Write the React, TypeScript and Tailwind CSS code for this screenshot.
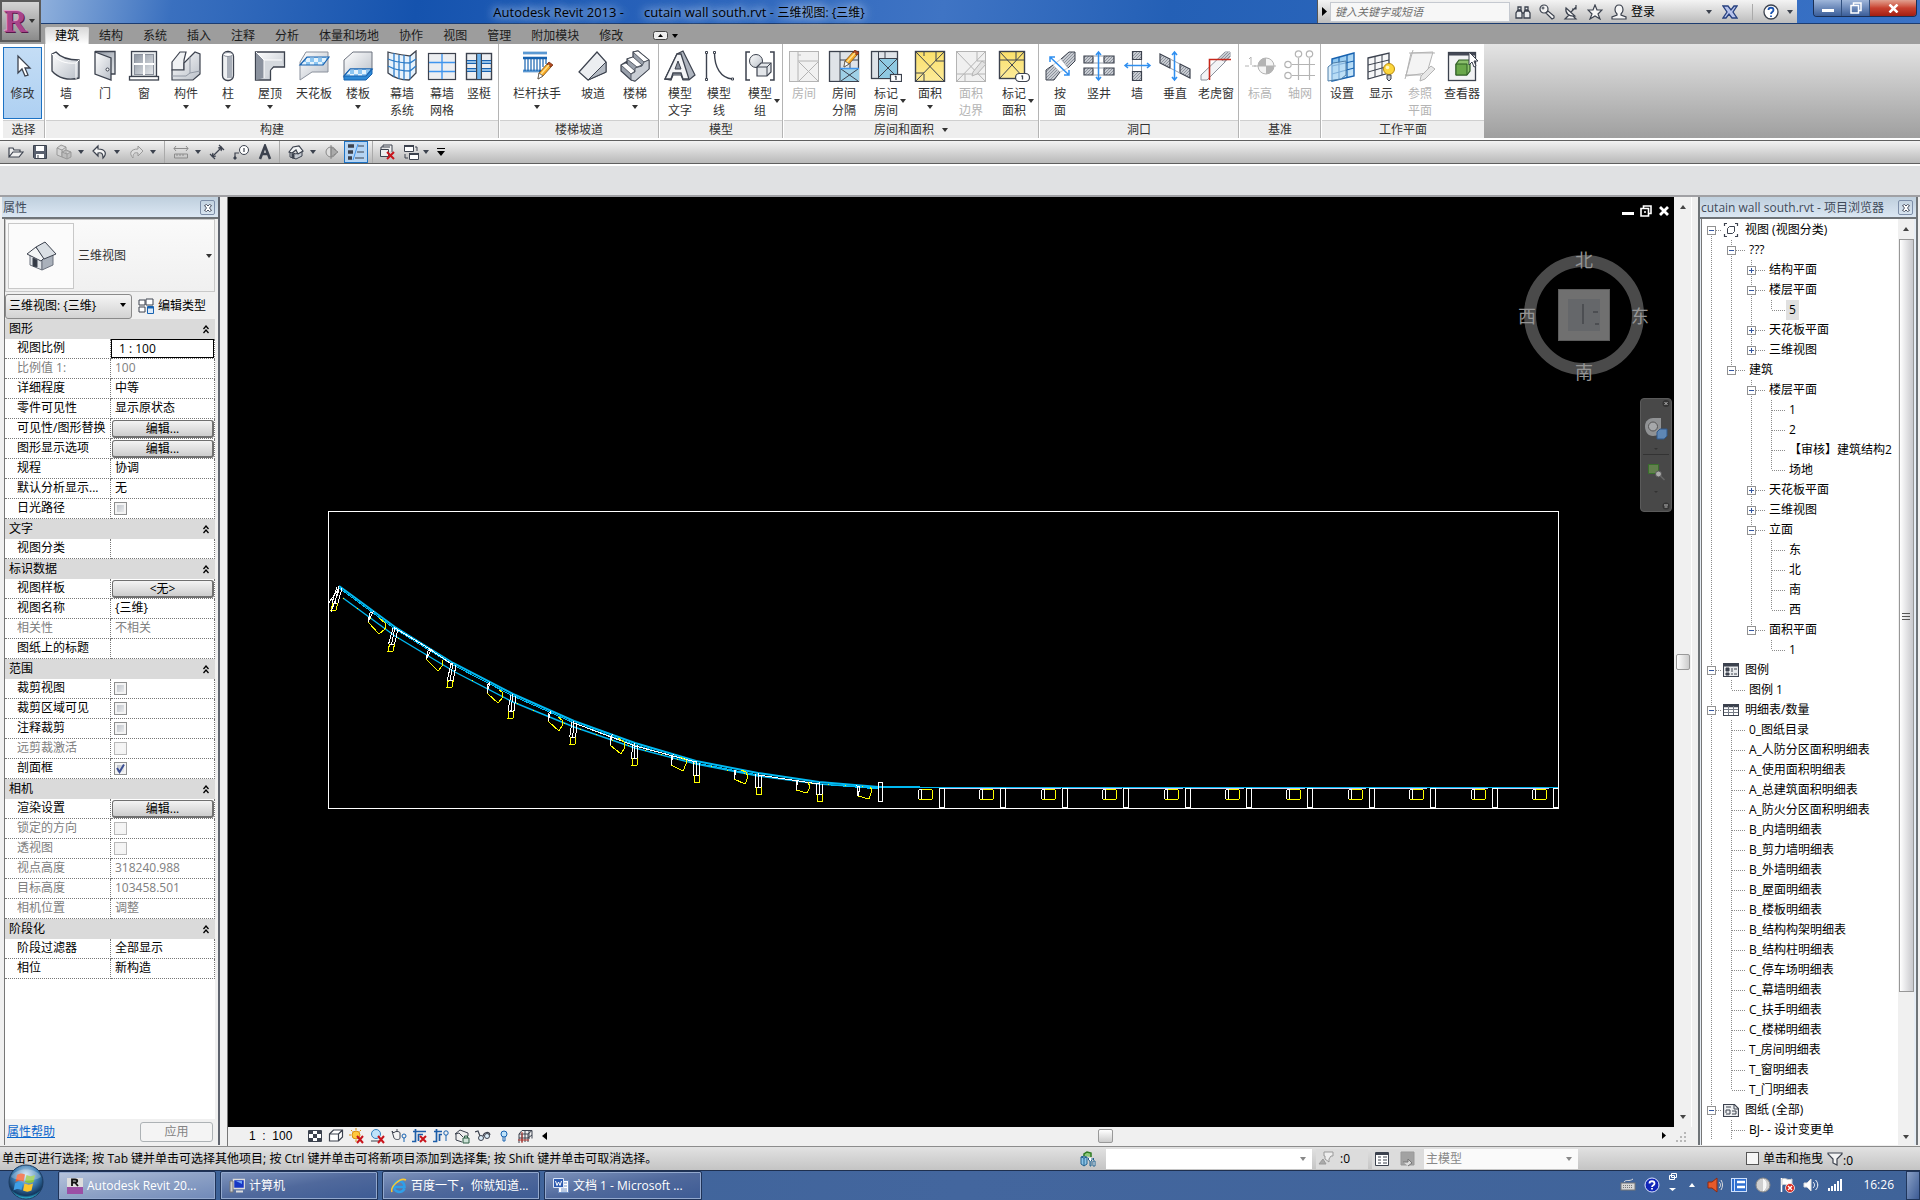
import type { ReactNode } from "react";

const INK = "#3c424e";
const GREY = "#b4b4b4";
const BLUE = "#1762b0";

type SvgProps = { children: ReactNode; size?: number; className?: string };

function Svg({ children, size = 16, className = "" }: SvgProps) {
  return (
    <svg
      width={size}
      height={size}
      viewBox={`0 0 ${size} ${size}`}
      fill="none"
      stroke={INK}
      strokeWidth={1}
      aria-hidden="true"
      className={`shrink-0 ${className}`}
    >
      {children}
    </svg>
  );
}

function Caret({ className = "" }: { className?: string }) {
  return (
    <svg width="6" height="4" viewBox="0 0 6 4" aria-hidden="true" className={`shrink-0 ${className}`}>
      <path d="M0 0h6L3 4z" fill="currentColor" />
    </svg>
  );
}

// Gradients shared by all the icons
function Defs() {
  return (
    <svg className="absolute h-0 w-0" aria-hidden="true">
      <defs>
        <linearGradient id="metal" x1="0" y1="0" x2="1" y2="1">
          <stop offset="0" stopColor="#ffffff" />
          <stop offset="1" stopColor="#b9bfc8" />
        </linearGradient>
        <linearGradient id="metalDark" x1="0" y1="0" x2="1" y2="1">
          <stop offset="0" stopColor="#8d95a1" />
          <stop offset="1" stopColor="#e6e9ec" />
        </linearGradient>
        <linearGradient id="sky" x1="0" y1="0" x2="1" y2="1">
          <stop offset="0" stopColor="#7cbcec" />
          <stop offset="1" stopColor="#d6edfb" />
        </linearGradient>
        <linearGradient id="gold" x1="0" y1="0" x2="0" y2="1">
          <stop offset="0" stopColor="#fbe06a" />
          <stop offset="1" stopColor="#fdeb9a" />
        </linearGradient>
        <linearGradient id="purple" x1="0" y1="0" x2="1" y2="1">
          <stop offset="0" stopColor="#e6a6cf" />
          <stop offset="0.6" stopColor="#a8438a" />
          <stop offset="1" stopColor="#57164a" />
        </linearGradient>
        <radialGradient id="orb" cx="0.5" cy="0.3" r="0.7">
          <stop offset="0" stopColor="#cfe3f2" />
          <stop offset="0.5" stopColor="#3f7fb5" />
          <stop offset="0.85" stopColor="#12375f" />
          <stop offset="1" stopColor="#35d8f5" />
        </radialGradient>
        <pattern id="hatch" width="3" height="3" patternUnits="userSpaceOnUse">
          <rect width="3" height="3" fill="#c8ccd2" />
          <path d="M0 3L3 0" stroke="#7d838e" strokeWidth="0.8" />
        </pattern>
        <pattern id="check" width="8" height="8" patternUnits="userSpaceOnUse">
          <rect width="8" height="8" fill="#8cc6f2" />
          <path d="M0 0h4v4H0zM4 4h4v4H4z" fill="#e4f3fd" />
        </pattern>
      </defs>
    </svg>
  );
}

const pencil = (
  <g strokeWidth="0.8">
    <path d="M18 23l8-9 4 3-8 9-5 3z" fill="#f7a823" stroke="#7a4a12" />
    <path d="M26 14l2-2 4 3-2 2z" fill="#b0481e" stroke="#7a3212" />
    <path d="M20 24l8-9" stroke="#ffe08a" strokeWidth="1.6" />
    <path d="M18 23l-1 6 5-3z" fill="#fff" stroke="#555" />
  </g>
);

const icons: Record<string, ReactNode> = {
  modify: (
    <Svg size={32}>
      <path d="M11 6v17l4-4 3 7 3-1-3-7h5z" fill="#fff" strokeWidth="1.3" />
    </Svg>
  ),
  wall: (
    <Svg size={32}>
      <path d="M2 4l4-2c5 6 13 8 23 8v18c-11 3-21 0-27-7z" fill="url(#metal)" strokeWidth="1.3" />
      <path d="M2 4c6 7 13 10 24 9l3-3M26 13v16" stroke="#fff" />
    </Svg>
  ),
  door: (
    <Svg size={32}>
      <path d="M6 1.500h20V24h-4" fill="url(#metalDark)" strokeWidth="1.300" />
      <path d="M6 2l16 6v22L6 24z" fill="url(#metal)" strokeWidth="1.300" />
      <circle cx="18.500" cy="19.500" r="1.500" fill="#fff" />
    </Svg>
  ),
  window: (
    <Svg size={32}>
      <rect x="3.500" y="1.500" width="25" height="25" fill="#e8ebee" strokeWidth="1.300" />
      <rect x="6.500" y="4.500" width="19" height="20" fill="url(#metalDark)" stroke="#8b919c" />
      <path d="M16 4v21M6 14h20" stroke="#fff" strokeWidth="2" />
      <rect x="1.500" y="26.500" width="29" height="3.500" fill="#fff" strokeWidth="1.300" />
    </Svg>
  ),
  component: (
    <Svg size={32}>
      <path d="M2 12l8-10h6l-2 8v10H2z" fill="#f0f2f4" strokeWidth="1.200" />
      <path d="M20 7l5-5 5 2v20l-7 6H2V20h12v-7z" fill="url(#metal)" strokeWidth="1.200" />
      <path d="M20 7v16l-4 3H2M20 23l10-2" stroke="#9299a5" />
    </Svg>
  ),
  column: (
    <Svg size={32}>
      <rect x="10.500" y="1.500" width="11" height="29" rx="5" fill="#eef0f2" strokeWidth="1.300" />
      <rect x="15" y="4" width="5" height="24" fill="#a9afb9" stroke="none" />
      <ellipse cx="16" cy="4.500" rx="4.500" ry="2" fill="#fff" stroke="#8b919c" />
    </Svg>
  ),
  roof: (
    <Svg size={32}>
      <path d="M1.500 2h29v15h-11l-3 3v10h-15z" fill="url(#metal)" strokeWidth="1.300" />
      <path d="M2 2l8 8v18l-8 2z" fill="#8b929e" stroke="none" />
      <path d="M10 10h18l2 6H19l-3 4-6 8z" fill="#d5d9de" stroke="none" />
      <path d="M2 2l8 8h18M10 10v18" stroke="#fff" />
    </Svg>
  ),
  ceiling: (
    <Svg size={32}>
      <path d="M2 12v18l12-8h16V2H8z" fill="url(#metal)" stroke="#8b919c" />
      <path d="M9 7h22l-6 8H2z" fill="url(#check)" stroke={BLUE} strokeWidth="1.200" />
    </Svg>
  ),
  floor: (
    <Svg size={32}>
      <path d="M2 10l9-8h19v18H10l-8 8z" fill="url(#metal)" stroke="#6c727e" />
      <path d="M8 19h22v5l-6 6H2v-4z" fill="#2f8ad6" stroke={BLUE} />
      <path d="M8 19h22l-6 7H2z" fill="url(#check)" stroke={BLUE} strokeWidth="1.200" />
    </Svg>
  ),
  curtainSystem: (
    <Svg size={32}>
      <path d="M2 2c7 2 15 3 22 4l6-5v22l-7 7C14 30 7 27 2 23z" fill="#e8f3fc" strokeWidth="1.300" />
      <path d="M24 6v23M8 3v24M13 5v24M18 5v25M2 9c7 3 15 4 22 4l6-4M2 16c7 4 15 5 22 5l6-5" stroke="#2b7cc9" strokeWidth="1.300" />
    </Svg>
  ),
  curtainGrid: (
    <Svg size={32}>
      <rect x="2.500" y="3.500" width="27" height="26" fill="#eceef1" strokeWidth="1.200" />
      <path d="M3 12.500h26M3 21.500h26M16 4v25" stroke="#3f95ee" strokeWidth="1.400" />
    </Svg>
  ),
  mullion: (
    <Svg size={32}>
      <rect x="3.500" y="3.500" width="25" height="26" fill="#eceef1" strokeWidth="1.400" />
      <path d="M4 12h24M4 20h24" stroke={BLUE} strokeWidth="4" />
      <path d="M4 12h24M4 20h24" stroke="#b9ddf7" strokeWidth="1.500" />
      <path d="M16 3v27" stroke={INK} strokeWidth="6" />
      <path d="M16 4v25" stroke="#6db4ee" strokeWidth="3.600" />
    </Svg>
  ),
  railing: (
    <Svg size={32}>
      <path d="M2 3h24M2 8h24M2 21h18" stroke={BLUE} strokeWidth="2.600" />
      <path d="M2 3h24M2 21h16" stroke="#9fd0f5" />
      <path d="M4 9v12M7 9v12M10 9v12M13 9v12M16 9v12M19 9v12M22 9v8M25 9v5" stroke={BLUE} strokeWidth="1.200" />
      {pencil}
    </Svg>
  ),
  ramp: (
    <Svg size={32}>
      <path d="M2 22L20 2l9 10v10L11 30z" fill="#eceef1" strokeWidth="1.200" />
      <path d="M11 30L29 12v10z" fill="#b3b9c2" strokeWidth="1" />
    </Svg>
  ),
  stair: (
    <Svg size={32}>
      <path d="M2 15l5-3 1 3 0-6 6-2 0-5 5-1 11 9v9L16 31l-4-1-10-9z" fill="#9aa1ac" strokeWidth="1.200" />
      <path d="M14 2l5-1 11 9-5 2zM8 9l6-2 9 8-5 2zM2 15l5-2 9 8-4 3z" fill="#fff" strokeWidth="0.800" />
      <path d="M25 12l5-2v9L16 31l-4-1v-6l4-2v-4l7-2z" fill="#c9ced5" strokeWidth="0.800" />
    </Svg>
  ),
  modelText: (
    <Svg size={32}>
      <path d="M1 29L13 4l6-3 12 24-6 5h-6l-2-5H9l-2 5z" fill="#aeb4be" strokeWidth="1.200" />
      <path d="M1 29L13 4h4l8 25h-6l-2-6H9l-2 6z" fill="#f4f5f7" strokeWidth="1.300" />
      <path d="M11 19l3-8 3 8z" fill="#8a919d" />
    </Svg>
  ),
  modelLine: (
    <Svg size={32}>
      <path d="M3.500 3v26M11.500 3c0 14 6 25 18 26" strokeWidth="1.400" />
      <path d="M2.500 1.500h2v2h-2zM2.500 28.500h2v2h-2zM10.500 1.500h2v2h-2zM28.500 28h2v2h-2z" fill="#fff" />
    </Svg>
  ),
  modelGroup: (
    <Svg size={32}>
      <path d="M6 2H2v28h4M26 2h4v28h-4" strokeWidth="1.500" />
      <circle cx="12" cy="11" r="6.500" fill="url(#metal)" />
      <path d="M13 17l4-4h10v9l-4 4H13z" fill="#e3e6ea" strokeWidth="1.200" />
      <path d="M13 17h10v9M23 17l4-4" />
    </Svg>
  ),
  room: (
    <Svg size={32}>
      <rect x="1.500" y="1.500" width="29" height="30" fill="#f1f1f1" stroke={GREY} />
      <path d="M10 1v30M10 11h21M11 12l19 19M30 12L11 31M10 5h3" stroke={GREY} />
    </Svg>
  ),
  roomSep: (
    <Svg size={32}>
      <rect x="1.500" y="1.500" width="29" height="30" fill="#dfe3e8" strokeWidth="1.300" />
      <path d="M12 19h19v12H12z" fill="#9fd0e6" stroke="none" />
      <path d="M12 1v30M12 10h18M13 31l17-12M13 19l17 12M22 10v9" />
      <path d="M12 18.500h19" stroke="#3f95ee" strokeWidth="1.500" />
      <g transform="translate(-1 -12)">{pencil}</g>
    </Svg>
  ),
  roomTag: (
    <Svg size={32}>
      <rect x="1.500" y="1.500" width="26" height="27" fill="#dfe3e8" strokeWidth="1.300" />
      <path d="M9 8h18v20H9z" fill="#8fc9e2" stroke="none" />
      <path d="M8.500 2v26M8 8.500h19M9 9l18 18M27 9L9 27M15 2v6" />
      <rect x="20.500" y="24.500" width="11" height="7" fill="#fff" strokeWidth="1.200" />
      <path d="M26 26v4M25 27l1-1" strokeWidth="1.300" />
    </Svg>
  ),
  area: (
    <Svg size={32}>
      <rect x="1.500" y="1.500" width="29" height="30" fill="url(#gold)" strokeWidth="1.400" />
      <path d="M2 2l28 29M30 2L2 31M10 24v7M2 23h8M22 2v9h9M10 2v4" />
    </Svg>
  ),
  areaBoundary: (
    <Svg size={32}>
      <rect x="1.500" y="1.500" width="29" height="30" fill="#f0f0f0" stroke={GREY} />
      <path d="M2 2l28 29M30 2L2 31M2 24h28M10 24v7M22 2v9h9" stroke={GREY} />
      <path d="M18 22l9-11 4 3-9 10-5 2z" fill="#e2e2e2" stroke={GREY} />
    </Svg>
  ),
  areaTag: (
    <Svg size={32}>
      <rect x="1.500" y="1.500" width="25" height="27" fill="url(#gold)" strokeWidth="1.400" />
      <path d="M2 2l24 26M26 2L2 28M2 10h24M18 2v8" />
      <rect x="17.500" y="23.500" width="14" height="8" rx="4" fill="#fff" strokeWidth="1.200" />
      <path d="M24.500 25.500v4M23.500 26.500l1-1" strokeWidth="1.300" />
    </Svg>
  ),
  byFace: (
    <Svg size={32}>
      <path d="M17 9l8-7h6v9l-7 7z" fill="url(#hatch)" />
      <path d="M2 30v-10l7-5 7 7-6 8z" fill="url(#hatch)" />
      <path d="M9 15l8-6 7 9-8 4z" fill="#fff" stroke="#c2c6cc" />
      <path d="M6 7l19 18M6 12V7h5M25 20v5h-5" stroke="#2f8ff0" strokeWidth="1.500" />
    </Svg>
  ),
  shaft: (
    <Svg size={32}>
      <path d="M1 6h9v7H1zM21 6h10v7H21zM1 18h9v7H1zM21 18h10v7H21z" fill="url(#hatch)" strokeWidth="1.200" />
      <path d="M10 6h11M10 13h11M10 18h11M10 25h11" stroke="#9aa0aa" />
      <path d="M15.500 2v28M13 5l2.500-3L18 5M13 27l2.500 3 2.500-3" stroke="#2f8ff0" strokeWidth="1.500" />
    </Svg>
  ),
  wallOpening: (
    <Svg size={32}>
      <path d="M11.500 1.500h9v8h-9zM11.500 21.500h9v9h-9z" fill="url(#hatch)" strokeWidth="1.200" />
      <path d="M11.500 10v11M20.500 10v11" stroke="#9aa0aa" />
      <path d="M4 15.500h25M7 13l-3 2.500L7 18M26 13l3 2.500-3 2.500" stroke="#2f8ff0" strokeWidth="1.500" />
    </Svg>
  ),
  vertical: (
    <Svg size={32}>
      <path d="M1 4l10 5v9L1 13zM21 14l10 5v9l-10-5z" fill="url(#hatch)" strokeWidth="1.200" />
      <path d="M11 9l10 5M11 18l10 5" stroke="#9aa0aa" />
      <path d="M15.500 2v28M13 5l2.500-3L18 5M13 27l2.500 3 2.500-3" stroke="#2f8ff0" strokeWidth="1.500" />
    </Svg>
  ),
  dormer: (
    <Svg size={32}>
      <path d="M1 30v-5L25 2h5v5L7 30z" fill="#f3f4f6" stroke="#8b919c" />
      <path d="M18 9l7-7h5v5l-5 5z" fill="url(#hatch)" stroke="none" />
      <path d="M9.500 30V9.500H31" stroke="#c6281c" strokeWidth="1.600" />
    </Svg>
  ),
  level: (
    <Svg size={32}>
      <path d="M1 16h4M8 16h4M7 7v8M5 9l2-2" stroke={GREY} />
      <circle cx="22" cy="16" r="8" fill="#f4f4f4" stroke={GREY} />
      <path d="M22 8v8h-8a8 8 0 018-8zM22 24v-8h8a8 8 0 01-8 8z" fill={GREY} stroke="none" />
      <path d="M10 16h22" stroke={GREY} />
    </Svg>
  ),
  grid: (
    <Svg size={32}>
      <path d="M14.500 8v22M25.500 8v22M8 14.500h23M8 25.500h23" stroke={GREY} strokeWidth="1.200" />
      <g fill="#fff" stroke={GREY} strokeWidth="1.200">
        <circle cx="14.500" cy="4" r="3.200" />
        <circle cx="25.500" cy="4" r="3.200" />
        <circle cx="4" cy="14.500" r="3.200" />
        <circle cx="4" cy="25.500" r="3.200" />
      </g>
    </Svg>
  ),
  setPlane: (
    <Svg size={32}>
      <path d="M6 9l22-6v23L6 31z" fill="url(#sky)" stroke={BLUE} strokeWidth="1.400" />
      <path d="M13 7v22M21 5v22M6 16l22-5M6 24l22-6" stroke={BLUE} strokeWidth="1.200" />
      <path d="M2 17l5-4 13-2v14l-5 4-13 2z" fill="#c5e3f7" fillOpacity="0.600" stroke="#4e7ea8" />
    </Svg>
  ),
  showPlane: (
    <Svg size={32}>
      <path d="M3 8l21-5v20L3 29z" fill="#f6f7f8" strokeWidth="1.300" />
      <path d="M10 6v21M17 5v20M3 15l21-5M3 22l21-6" />
      <circle cx="24" cy="19" r="5.500" fill="#fcd63c" stroke="#b98a10" />
      <circle cx="22.500" cy="17.500" r="1.800" fill="#fff7c4" stroke="none" />
      <path d="M22 25h4v4l-2 2-2-2z" fill="#c9ced5" />
    </Svg>
  ),
  refPlane: (
    <Svg size={32}>
      <path d="M7 3l22-1-6 21-21 3z" fill="#f4f4f4" stroke={GREY} />
      <path d="M5 3h26M9 0L1 29M1 25h16" stroke={GREY} />
      <path d="M17 26l10-10 4 3-10 10-5 2z" fill="#e8e8e8" stroke={GREY} />
    </Svg>
  ),
  viewer: (
    <Svg size={32}>
      <rect x="2.500" y="2.500" width="27" height="28" fill="#f2f3f4" strokeWidth="1.300" />
      <path d="M3 3h26v2H3z" fill="#4c4f5c" />
      <path d="M10 14l3-4h11v11l-3 4H10z" fill="#8cc06c" stroke="#2d5d22" strokeWidth="1.200" />
      <path d="M10 14h11v11H10z" fill="#6aa84a" stroke="#2d5d22" />
      <path d="M23 2v13l3-3 2 5 2-1-2-5h4z" fill="#fff" />
    </Svg>
  ),
};

type Tool = { text: string; icon: string; width: string; caret?: "below" | "side"; off?: boolean };
type Panel = { title: string; menu?: boolean; tools: Tool[] };

const panels: Panel[] = [
  {
    title: "构建",
    tools: [
      { text: "墙", icon: "wall", width: "w-10", caret: "below" },
      { text: "门", icon: "door", width: "w-[38px]" },
      { text: "窗", icon: "window", width: "w-10" },
      { text: "构件", icon: "component", width: "w-11", caret: "below" },
      { text: "柱", icon: "column", width: "w-10", caret: "below" },
      { text: "屋顶", icon: "roof", width: "w-11", caret: "below" },
      { text: "天花板", icon: "ceiling", width: "w-11" },
      { text: "楼板", icon: "floor", width: "w-11", caret: "below" },
      { text: "幕墙\n系统", icon: "curtainSystem", width: "w-11" },
      { text: "幕墙\n网格", icon: "curtainGrid", width: "w-9" },
      { text: "竖梃", icon: "mullion", width: "w-[38px]" },
    ],
  },
  {
    title: "楼梯坡道",
    tools: [
      { text: "栏杆扶手", icon: "railing", width: "w-[74px]", caret: "below" },
      { text: "坡道", icon: "ramp", width: "w-[38px]" },
      { text: "楼梯", icon: "stair", width: "w-[46px]", caret: "below" },
    ],
  },
  {
    title: "模型",
    tools: [
      { text: "模型\n文字", icon: "modelText", width: "w-10" },
      { text: "模型\n线", icon: "modelLine", width: "w-[38px]" },
      { text: "模型\n组", icon: "modelGroup", width: "w-11", caret: "side" },
    ],
  },
  {
    title: "房间和面积",
    menu: true,
    tools: [
      { text: "房间", icon: "room", width: "w-10", off: true },
      { text: "房间\n分隔", icon: "roomSep", width: "w-10" },
      { text: "标记\n房间", icon: "roomTag", width: "w-11", caret: "side" },
      { text: "面积", icon: "area", width: "w-11", caret: "below" },
      { text: "面积\n边界", icon: "areaBoundary", width: "w-[38px]", off: true },
      { text: "标记\n面积", icon: "areaTag", width: "w-12", caret: "side" },
    ],
  },
  {
    title: "洞口",
    tools: [
      { text: "按\n面", icon: "byFace", width: "w-10" },
      { text: "竖井", icon: "shaft", width: "w-[38px]" },
      { text: "墙", icon: "wallOpening", width: "w-[38px]" },
      { text: "垂直", icon: "vertical", width: "w-[38px]" },
      { text: "老虎窗", icon: "dormer", width: "w-11" },
    ],
  },
  {
    title: "基准",
    tools: [
      { text: "标高", icon: "level", width: "w-10", off: true },
      { text: "轴网", icon: "grid", width: "w-10", off: true },
    ],
  },
  {
    title: "工作平面",
    tools: [
      { text: "设置", icon: "setPlane", width: "w-10" },
      { text: "显示", icon: "showPlane", width: "w-[38px]" },
      { text: "参照\n平面", icon: "refPlane", width: "w-10", off: true },
      { text: "查看器", icon: "viewer", width: "w-11" },
    ],
  },
];

const tabs = ["建筑", "结构", "系统", "插入", "注释", "分析", "体量和场地", "协作", "视图", "管理", "附加模块", "修改"];

function TitleBar() {
  return (
    <div className="flex h-6 items-start border-b border-[#1c3c70] bg-[linear-gradient(100deg,#8fb0dc_0%,#3a70bf_7%,#1553ae_20%,#2a63bb_34%,#3f74c4_48%,#2460b6_60%,#3a72c6_100%)]">
      <div className="flex flex-1 items-center justify-center gap-5 self-center text-[13px] leading-5 whitespace-pre text-black [text-shadow:0_0_8px_#d5e4f8,0_0_12px_#b9d0f0]">
        <span>Autodesk Revit 2013 -</span>
        <h1>cutain wall south.rvt - <span className="text-xs">三维视图: {"{三维}"}</span></h1>
      </div>
      <div className="flex h-[23px] w-[480px] items-center border-l border-[#555] bg-linear-to-b from-[#f4f4f4] to-[#bcbcbc]">
        <button type="button" aria-label="展开" className="flex w-3 justify-center text-black">
          <svg width="5" height="9" viewBox="0 0 5 9"><path d="M0 0l5 4.500L0 9z" /></svg>
        </button>
        <input
          aria-label="搜索"
          placeholder="键入关键字或短语"
          className="h-5 w-[180px] border border-[#c5c9d0] bg-[#f7f7f7] pl-1 text-[11px] italic placeholder:text-[#6e6e6e]"
        />
        <div className="flex flex-1 items-center pl-[5px]">
          <div className="flex gap-2">
            <Svg><path d="M3 3h3v4H3zM10 3h3v4h-3zM1 14V9l2-3h3l1 3v5zM15 14V9l-2-3h-3L9 9v5zM7 9h2" fill="#e8eaec" strokeWidth="1.300" /></Svg>
            <Svg><circle cx="5" cy="5" r="4" fill="#f2f2f2" strokeWidth="1.200" /><circle cx="4" cy="4" r="1" /><path d="M7 9l6 6 2-1v-2l-6-5z" fill="#f2f2f2" strokeWidth="1.200" /></Svg>
            <Svg><path d="M3 4c-1 5 3 9 9 8zM8 8l5-5M13 1v4h-4M6 11l-4 4h11l-3-3" fill="#f2f2f2" strokeWidth="1.200" /></Svg>
            <Svg><path d="M8 1l2 5h5l-4 4 2 5-5-3-5 3 2-5-4-4h5z" fill="#f6f6f6" strokeWidth="1.200" /></Svg>
            <Svg><path d="M8 1c3 0 4 2 4 5 0 2-1 3-2 4v1l5 2v2H1v-2l5-2v-1C5 9 4 8 4 6c0-3 1-5 4-5z" fill="#f6f6f6" strokeWidth="1.200" /></Svg>
          </div>
          <button type="button" className="ml-1 text-xs text-black">登录</button>
          <div className="ml-auto flex items-center gap-2.5 pr-1 text-[#3c424e]">
            <Caret />
            <Svg className="mr-1"><path d="M1 2h5l3 4 3-4h3l-4 6 4 6h-5l-3-4-3 4H1l4-6z" fill="#b7c3ec" stroke="#27407f" strokeWidth="1.300" /></Svg>
            <span className="h-4 w-px bg-[#aaa]" />
            <span className="flex items-center gap-2">
              <Svg><circle cx="8" cy="8" r="7" fill="#fff" strokeWidth="1.300" /><path d="M5.500 6c0-3 5-3 5 0 0 2-2.500 2-2.500 4M8 11.500V13" stroke="#1d55b0" strokeWidth="1.800" /></Svg>
              <Caret />
            </span>
          </div>
        </div>
      </div>
      <div className="ml-4 mr-[3px] flex h-[17px] overflow-hidden rounded-b-sm border border-t-0 border-[#1a2f55]">
        <button type="button" aria-label="最小化" className="flex w-7 items-end justify-center border-r border-[#31507f] bg-linear-to-b from-[#9fb6da] to-[#3b5e99] pb-1">
          <span className="h-[3px] w-3 bg-white" />
        </button>
        <button type="button" aria-label="还原" className="flex w-7 items-center justify-center border-r border-[#31507f] bg-linear-to-b from-[#9fb6da] to-[#3b5e99]">
          <svg width="12" height="12" viewBox="0 0 12 12" fill="none" stroke="#fff" strokeWidth="1.500"><path d="M3.500 3V1h7.500v7.500H9M1 3.500h7.500V11H1z" /></svg>
        </button>
        <button type="button" aria-label="关闭" className="flex w-[46px] items-center justify-center bg-linear-to-b from-[#e0a090] via-[#c8412f] to-[#a31d12]">
          <svg width="11" height="9" viewBox="0 0 11 9" stroke="#fff" strokeWidth="2.500"><path d="M1.500 0.500l8 8M9.500 0.500l-8 8" /></svg>
        </button>
      </div>
    </div>
  );
}

function Header() {
  return (
    <header className="flex bg-[#9d9d9d]">
      <button type="button" aria-label="应用程序菜单" className="flex h-[42px] w-[41px] items-center justify-between border-2 border-[#5b5b5b] bg-linear-to-b from-[#d4d4d4] to-[#8b8b8b] pr-1">
        <span className="pl-0.5 font-['Liberation_Serif',serif] text-[32px] leading-[38px] font-bold text-[#a8438a] [text-shadow:1px_1px_0_#57164a,-1px_-1px_0_#e0a0c8]">R</span>
        <Caret className="text-[#333]" />
      </button>
      <div className="min-w-0 flex-1">
        <TitleBar />
        <nav className="flex h-5 items-end pl-1">
          {tabs.map((tab, i) => (
            <button
              key={tab}
              type="button"
              className={
                i === 0
                  ? "h-[17px] rounded-t-xs border border-b-0 border-[#d8d8d8] bg-linear-to-b from-[#d9d9d9] to-white px-[9px] text-xs leading-4 text-black"
                  : "h-[17px] px-2.5 text-xs leading-4 text-[#1c1c1c]"
              }
            >
              {tab}
            </button>
          ))}
          <button type="button" aria-label="最小化功能区" className="ml-5 flex h-[17px] items-center gap-1 text-black">
            <svg width="15" height="9" viewBox="0 0 15 9"><rect x="0.500" y="0.500" width="14" height="8" rx="2" fill="#eee" stroke="#444" /><path d="M5 6h5L7.500 3z" /></svg>
            <Caret />
          </button>
        </nav>
      </div>
    </header>
  );
}

function Ribbon() {
  return (
    <div className="flex border-b-2 border-white bg-linear-to-b from-[#e4e4e4] to-[#9f9f9f]">
      <div className="flex w-[45px] flex-col border-r border-[#b4b4b4] bg-white pl-[3px]">
        <div className="flex h-[76px] pt-[3px] pr-0.5 pb-px">
          <button type="button" className="flex flex-1 flex-col items-center gap-[3px] border border-[#1c72c4] bg-linear-to-b from-[#c4ddf5] to-[#aed0f2] pt-0.5 text-xs leading-[17px] text-[#333]">
            {icons.modify}
            修改
          </button>
        </div>
        <h2 className="h-[18px] border-t border-[#cfcfcf] bg-[#eee] text-center text-xs leading-[18px] text-[#333]">选择</h2>
      </div>
      {panels.map((panel) => (
        <section key={panel.title} className="border-r border-[#b4b4b4] bg-white pl-px last:border-r-0">
          <div className="flex h-[76px]">
            {panel.tools.map((tool) => (
              <button
                key={tool.icon}
                type="button"
                disabled={tool.off}
                className={`${tool.width} flex flex-col items-center pt-1.5 text-xs leading-[17px] whitespace-pre ${tool.off ? "text-[#b4b4b4]" : "text-[#333]"}`}
              >
                {icons[tool.icon]}
                <span className="relative mt-[3px] text-center">
                  {tool.text}
                  {tool.caret === "side" && <Caret className="absolute top-3.5 -right-2" />}
                </span>
                {tool.caret === "below" && <Caret className="mt-[3px]" />}
              </button>
            ))}
          </div>
          <h2 className="flex h-[18px] items-center justify-center gap-2 border-t border-[#cfcfcf] bg-[#eee] text-xs text-[#333]">
            {panel.title}
            {panel.menu && <Caret />}
          </h2>
        </section>
      ))}
    </div>
  );
}

function QuickAccess() {
  return (
    <div className="flex h-6 items-center border-y border-[#5f5f5f] bg-linear-to-b from-[#f2f2f2] to-[#b9b9b9] pl-2 text-[#3c424e]">
      <div className="flex items-center gap-2">
        <Svg><path d="M1 13V4h4l1 2h6v2M1 13l4-5h10l-4 5z" fill="#eee" strokeWidth="1.200" /></Svg>
        <Svg><path d="M1.500 1.500h13v13h-12l-1-1z" fill="#59606e" /><path d="M4 2h8v5H4zM4 10h8v4H4z" fill="#fff" stroke="none" /><path d="M6 11v3" /></Svg>
        <span className="flex items-center gap-1.5">
          <Svg><path d="M1 4l4-3 5 2v7l-4 3-5-2zM1 4l5 2 4-3M6 6v7" fill="#d4d4d4" stroke="#999" /><path d="M6 8l4-2 5 2v5l-4 2-5-2zM6 8l5 2 4-2M11 10v5" fill="#bcbcbc" stroke="#999" /></Svg>
          <Caret />
        </span>
        <span className="flex items-center gap-1.5">
          <Svg><path d="M6 2L1 7l5 5V9c4-1 5 1 5 5 4-4 3-9-5-9z" fill="#f4f4f4" strokeWidth="1.200" /></Svg>
          <Caret />
        </span>
        <span className="flex items-center gap-1.5">
          <Svg><path d="M10 2l5 5-5 5V9C6 8 5 10 5 14 1 10 2 5 10 5z" fill="#ddd" stroke="#999" /></Svg>
          <Caret />
        </span>
      </div>
      <div className="ml-2 flex h-full items-center gap-2 border-l border-[#aaa] pl-2">
        <span className="flex items-center gap-1.5">
          <Svg><path d="M1 4.500h14M3 2L1 4.500 3 7M13 2l2 2.500L13 7M1.500 10h13v4h-13zM4 10v2M7 10v2M10 10v2" stroke="#8c8c8c" /></Svg>
          <Caret />
        </span>
        <Svg><path d="M3 13L13 3M1 10l5 5M10 1l5 5M3 13l1-4M3 13l4-1M13 3L9 4M13 3l-1 4" strokeWidth="1.200" /></Svg>
        <Svg><circle cx="11" cy="6" r="4.500" fill="#fff" /><path d="M11 4v4M2 14V9h4" strokeWidth="1.200" /><path d="M1 13h2v2H1z" fill={INK} /></Svg>
        <Svg><path d="M3 15L8 2l5 13M5 10h6" strokeWidth="2.600" /></Svg>
      </div>
      <div className="ml-1.5 flex h-full items-center gap-2 border-l border-[#aaa] pl-2">
        <span className="flex items-center gap-1.5">
          <Svg><path d="M2 8l6 2 6-4v6l-6 3-6-2z" fill="#c3c8cf" /><path d="M1 8l4-5 6-1 4 5-5 3-2-4-4 3z" fill="#f2f4f5" strokeWidth="1.200" /><path d="M4 10h2v4H4z" fill={INK} /></Svg>
          <Caret />
        </span>
        <Svg><circle cx="7" cy="8" r="5" fill="#ddd" stroke="#888" /><path d="M7 1v14M7 3l7 5-7 5z" fill="#aaa" stroke="#888" /></Svg>
      </div>
      <button type="button" aria-label="细线" className="ml-1 flex h-full w-6 items-center justify-center border border-[#1c72c4] bg-[#b5d4f3]">
        <Svg size={18}><path d="M1 3h6M1 9h5M1 15h4" strokeWidth="3.500" /><path d="M11 3h6M10 9h7M8 15h9" strokeWidth="1.200" /><path d="M11 1L6 17" stroke="#3f95ee" /></Svg>
      </button>
      <div className="ml-1 flex h-full items-center gap-2 border-l border-[#aaa] pl-1.5">
        <Svg><path d="M4 3V1h9v7M2 5V3h9M1.500 5.500h8v7h-8z" fill="#eee" /><path d="M8 8l7 7M15 8l-7 7" stroke="#c8141c" strokeWidth="2" /></Svg>
        <span className="flex items-center gap-1">
          <Svg><path d="M1.500 1.500h9v6h-9zM6.500 9.500h9v6h-9z" fill="#fff" /><path d="M1 2h10M6 10h10" strokeWidth="2" /><path d="M12 3h2v4M2 10v4h3" /></Svg>
          <Caret />
        </span>
        <svg width="8" height="8" viewBox="0 0 8 8" aria-hidden="true"><path d="M0 0h8v1H0zM0 3h8L4 8z" /></svg>
      </div>
    </div>
  );
}

type Kind = "text" | "button" | "check" | "input";
type Prop = [name: string, value: string, kind?: Kind, off?: boolean];

const groups: { title: string; rows: Prop[] }[] = [
  {
    title: "图形",
    rows: [
      ["视图比例", "1 : 100", "input"],
      ["比例值 1:", "100", "text", true],
      ["详细程度", "中等"],
      ["零件可见性", "显示原状态"],
      ["可见性/图形替换", "编辑...", "button"],
      ["图形显示选项", "编辑...", "button"],
      ["规程", "协调"],
      ["默认分析显示...", "无"],
      ["日光路径", "", "check"],
    ],
  },
  { title: "文字", rows: [["视图分类", ""]] },
  {
    title: "标识数据",
    rows: [
      ["视图样板", "<无>", "button"],
      ["视图名称", "{三维}"],
      ["相关性", "不相关", "text", true],
      ["图纸上的标题", ""],
    ],
  },
  {
    title: "范围",
    rows: [
      ["裁剪视图", "", "check"],
      ["裁剪区域可见", "", "check"],
      ["注释裁剪", "", "check"],
      ["远剪裁激活", "", "check", true],
      ["剖面框", "1", "check"],
    ],
  },
  {
    title: "相机",
    rows: [
      ["渲染设置", "编辑...", "button"],
      ["锁定的方向", "", "check", true],
      ["透视图", "", "check", true],
      ["视点高度", "318240.988", "text", true],
      ["目标高度", "103458.501", "text", true],
      ["相机位置", "调整", "text", true],
    ],
  },
  {
    title: "阶段化",
    rows: [
      ["阶段过滤器", "全部显示"],
      ["相位", "新构造"],
    ],
  },
];

function PropValue({ row }: { row: Prop }) {
  const [name, value, kind, off] = row;
  if (kind === "input") {
    return <input id={name} defaultValue={value} className="block h-[19px] w-full border border-black bg-white pb-px pl-[7px] text-xs" />;
  }
  if (kind === "button") {
    return (
      <button id={name} type="button" className="mx-px mt-px block h-[18px] w-[102px] rounded-[3px] border border-r-2 border-b-2 border-[#707070] bg-linear-to-b from-[#f4f4f4] to-[#cdcdcd] text-center text-xs leading-[14px]">
        {value}
      </button>
    );
  }
  if (kind === "check") {
    return (
      <span className="relative mt-[3px] ml-[3px] block h-[13px] w-[13px]">
        <input
          id={name}
          type="checkbox"
          defaultChecked={value === "1"}
          disabled={off}
          className="peer block h-[13px] w-[13px] appearance-none border border-[#8e8f8f] bg-linear-to-br from-[#b4bac2] to-[#f6f6f6] shadow-[inset_0_0_0_2px_#f4f4f4] disabled:border-[#b9b9b9] disabled:from-[#f4f4f4]"
        />
        <svg viewBox="0 0 13 13" className="pointer-events-none absolute inset-0 hidden peer-checked:block"><path d="M3 6l2.500 4L10 2.500" fill="none" stroke="#3b4f93" strokeWidth="2" /></svg>
      </span>
    );
  }
  return <span className="pl-1">{value}</span>;
}

function PanelTitle({ text }: { text: string }) {
  return (
    <div className="flex h-[22px] items-center justify-between border-b-2 border-[#6f7478] bg-linear-to-b from-[#bfcfdd] to-[#dbe7f3] pt-px pr-[3px] pl-px text-xs text-[#3f4a59]">
      <h2 className="whitespace-nowrap">{text}</h2>
      <button type="button" aria-label="关闭" className="flex h-[15px] w-[15px] items-center justify-center rounded-xs border border-[#7d8ea8]">
        <svg width="8" height="8" viewBox="0 0 8 8" fill="none" stroke="#4a5262"><path d="M0.500 1.500l2-1L4 2l1.500-1.500 2 1L5.500 4l2 2.500-2 1L4 6 2.500 7.500l-2-1L2.500 4z" fill="#fff" /></svg>
      </button>
    </div>
  );
}

function Properties() {
  return (
    <aside className="flex w-[228px] shrink-0 flex-col border-r border-[#777] bg-[#f0f0f0]">
      <div className="mb-px ml-0.5 flex w-[218px] flex-1 flex-col border-r-2 border-[#5f646e] bg-[#f0f0f0]">
        <PanelTitle text="属性" />
        <div className="ml-0.5 mr-[3px] flex flex-1 flex-col border-l border-[#777]">
          <div className="flex h-[73px] items-center border border-[#c8c8c8] bg-linear-to-b from-[#fafafa] to-[#f0f0f0] pr-0.5 pl-0.5 text-xs text-[#333]">
            <span className="flex h-[66px] w-[66px] items-center justify-center border border-[#c8c8c8] bg-[#fbfbfb]">
              <Svg size={32}>
                <path d="M5 15l12 5v10L5 25z" fill="#dfe3e7" stroke="#6c727e" />
                <path d="M17 20l11-8v13l-11 5z" fill="#aab1bb" stroke="#6c727e" />
                <path d="M2 14l9-7 8 11-3 3z" fill="#f3f5f6" />
                <path d="M11 7l9-5 11 12-12 5z" fill="#dadfe4" />
                <path d="M8 18l4 2v7l-4-1z" fill="#333945" />
              </Svg>
            </span>
            <span className="ml-1 flex-1 pt-px">三维视图</span>
            <Caret />
          </div>
          <div className="flex h-[27px] items-center gap-1.5">
            <span className="relative">
              <select aria-label="类型" className="h-[25px] w-[127px] appearance-none rounded-[3px] border border-[#8a8a8a] bg-linear-to-b from-[#f5f5f5] to-[#d2d2d2] pl-[3px] text-xs text-black">
                <option>三维视图: {"{三维}"}</option>
              </select>
              <Caret className="pointer-events-none absolute top-[11px] right-1.5" />
            </span>
            <button type="button" className="flex items-center gap-1 text-xs text-black">
              <Svg><path d="M1 2h6v5H1zM8 1h7v6H8zM1 9h6v5H1z" fill="#fff" /><path d="M9.500 8.500h6v7h-6z" fill="#dce9f7" stroke={BLUE} /><path d="M10 9.500h5" stroke={BLUE} strokeWidth="2" /></Svg>
              编辑类型
            </button>
          </div>
          <div className="flex-1 bg-white">
            <table className="w-full table-fixed border-separate border-spacing-0 text-xs leading-[18px] text-black">
              {groups.map((group) => (
                <tbody key={group.title}>
                  <tr className="bg-[#dadada]">
                    <th className="h-5 w-[106px] p-0 pl-1 text-left font-normal">{group.title}</th>
                    <td className="h-5 p-0 pr-1.5">
                      <svg width="6" height="9" viewBox="0 0 6 9" fill="none" stroke="#000" strokeWidth="1.300" className="ml-auto"><path d="M0.500 4L3 1l2.500 3M0.500 8L3 5l2.500 3" /></svg>
                    </td>
                  </tr>
                  {group.rows.map((row) => (
                    <tr key={row[0]} className={row[3] ? "text-[#808080]" : ""}>
                      <td className="h-5 overflow-hidden border-r border-b border-dotted border-[#777] p-0 pl-3 align-top whitespace-nowrap">
                        {row[2] && row[2] !== "text" ? <label htmlFor={row[0]}>{row[0]}</label> : row[0]}
                      </td>
                      <td className="h-5 border-r border-b border-dotted border-[#777] p-0 align-top">
                        <PropValue row={row} />
                      </td>
                    </tr>
                  ))}
                </tbody>
              ))}
            </table>
          </div>
          <div className="flex h-[26px] items-center justify-between pl-0.5 text-xs">
            <a href="#help" className="text-[#0a66cc] underline">属性帮助</a>
            <button type="button" disabled className="mr-0.5 h-5 w-[73px] rounded-[3px] border border-[#adb2b5] bg-[#f4f4f4] text-[#838383]">应用</button>
          </div>
        </div>
      </div>
    </aside>
  );
}

// Outer edge of the curved facade, one vertex per bay
const facade = [
  [339, 586], [395, 627], [453, 663], [513, 694], [574, 721], [635, 743], [696, 761], [758, 773], [819, 782], [879, 787],
];
const inner = [
  [343, 598], [395, 636], [455, 672], [513, 702], [574, 727], [635, 748], [696, 764], [758, 776], [819, 784], [879, 788],
];
// x and y of each post's foot
const feet = [
  [333, 611], [390, 652], [449, 688], [510, 719], [572, 745], [634, 766], [696, 783], [758, 795], [819, 802],
];
const lights = [
  { white: "373,612 368,622 370,613", yellow: "368,622 379,634 385,629 385,623 379,618" },
  { white: "431,650 426,660 428,651", yellow: "426,659 438,671 442,666 442,660" },
  { white: "490,682 487,693 487,686", yellow: "487,693 498,703 503,697 502,692 499,690" },
  { white: "551,711 548,721 548,714", yellow: "548,721 559,731 563,724 562,720 558,717" },
  { white: "612,735 610,745 610,737", yellow: "610,745 621,754 625,747 624,742 618,738" },
  { white: "673,755 671,765 671,757", yellow: "671,765 683,771 686,764 686,760 680,757" },
  { white: "736,770 734,779 734,770", yellow: "734,779 745,784 748,777 746,772 741,770" },
  { white: "798,780 796,790 796,780", yellow: "796,790 807,793 810,787 808,782" },
  { white: "860,787 858,796 857,786", yellow: "858,796 869,799 872,790 870,787" },
];
const bays = [0, 1, 2, 3, 4, 5, 6, 7, 8, 9, 10];

function Plan() {
  const line = (pts: number[][]) => pts.map((p) => p.join(",")).join(" ");
  return (
    <svg viewBox="228 197 1446 930" className="h-full w-full" fill="none" strokeWidth="1" shapeRendering="crispEdges" role="img" aria-label="三维视图">
      <rect x="328.500" y="511.500" width="1230" height="297" stroke="#fff" />
      <path d="M879 787.500H1558" stroke="#00b9f2" />
      <path d="M879 787H920" stroke="#00b9f2" strokeWidth="2" />
      <polyline points={line(facade)} stroke="#00b9f2" strokeWidth="2" shapeRendering="auto" />
      <polyline points={line(facade.map(([x, y]) => [x, y + 2]))} stroke="#00b9f2" />
      <polyline points={line(inner)} stroke="#00b9f2" strokeWidth="1.400" shapeRendering="auto" />
      <polyline points={line(inner)} stroke="#ff0" strokeDasharray="1 16" />
      <g stroke="#fff">
        <polyline points="395,628 428,648 453,665" />
        <polyline points="574,723 635,746 696,762" />
        <polyline points="758,775 819,784" />
        <path d="M944 788.500H1558" stroke="#dce" strokeDasharray="56 5" />
      </g>
      {feet.map(([x, y], i) => {
        const [tx, ty] = facade[i];
        const dx = ((tx - x) * 8) / (y - ty);
        return (
          <g key={x}>
            <path d={`M${tx - 2} ${ty + 1}L${x - 3 + dx} ${y - 8}M${tx + 3} ${ty + 2}L${x + 3 + dx} ${y - 8}M${tx} ${ty}L${x + dx} ${y - 8}M${x - 3 + dx} ${y - 8}h6`} stroke="#fff" />
            <path d={`M${x - 2 + dx} ${y - 8}L${x - 2} ${y - 1}h5L${x + 3 + dx} ${y - 8}`} stroke="#ff0" />
          </g>
        );
      })}
      <path d="M339 588l-11 16M339 590l-8 22" stroke="#fff" />
      {lights.map((l) => (
        <g key={l.white}>
          <polygon points={l.white} stroke="#fff" />
          <polyline points={l.yellow} stroke="#ff0" />
        </g>
      ))}
      <rect x="878.500" y="782.500" width="4" height="19" stroke="#fff" />
      {bays.map((i) => {
        const x = Math.round(942 + i * 61.4);
        return (
          <g key={i}>
            <rect x={x - 2.5} y="788.500" width="5" height="19" stroke="#fff" />
            <path d={`M${x - 20.5} 789v11M${x - 23.5} 790v9M${x - 23} 789.500h2`} stroke="#fff" />
            <path d={`M${x - 20} 789.500h10M${x - 9.5} 790v9M${x - 23} 799.500h13`} stroke="#ff0" />
          </g>
        );
      })}
    </svg>
  );
}

function ViewCube() {
  return (
    <svg width="140" height="142" viewBox="0 0 140 142" className="absolute top-12 right-[19px]" fill="#949494" fontSize="18" textAnchor="middle" aria-label="ViewCube">
      <circle cx="69" cy="70" r="54" fill="none" stroke="#4a4a4a" strokeWidth="12" />
      <rect x="43.500" y="44.500" width="51" height="51" fill="#707070" stroke="#5c5c5c" />
      <rect x="53" y="54" width="32" height="32" fill="#65676a" />
      <path d="M68 59v20M78 67h5M80 79h4" stroke="#4c4e52" strokeWidth="2" />
      <text x="69" y="22">北</text>
      <text x="69" y="134">南</text>
      <text x="12" y="78">西</text>
      <text x="125" y="78">东</text>
    </svg>
  );
}

function NavBar() {
  return (
    <div className="absolute top-[201px] right-0.5 h-[114px] w-8 rounded-sm border border-[#5a5a5a] bg-[#484848]">
      <svg width="30" height="112" viewBox="0 0 30 112" fill="none" aria-hidden="true">
        <circle cx="25" cy="4.500" r="3.500" fill="#333" />
        <path d="M23.500 3l3 3M26.500 3l-3 3" stroke="#bbb" />
        <path d="M4 27c0-5 4-8 8-8h8v10c0 5-3 8-8 8s-8-4-8-10z" fill="#909294" />
        <circle cx="12" cy="27.500" r="4.500" stroke="#555" fill="#a6a8aa" />
        <path d="M16 33l3-3h7v7l-3 3h-7z" fill="#5e87b5" stroke="#31598a" />
        <path d="M13 49h4l-2 2zM13 92h4l-2 2z" fill="#333" />
        <path d="M2 55.500h26" stroke="#333" />
        <path d="M7.500 65.500h10v9h-10z" fill="#627f4d" stroke="#39702c" />
        <circle cx="17.500" cy="75" r="3" fill="#aaa" stroke="#555" />
        <path d="M19.500 77l4 4" stroke="#666" strokeWidth="1.500" />
        <circle cx="25" cy="107" r="3.500" fill="#333" />
        <path d="M23 106h4M23.500 108h3" stroke="#bbb" />
      </svg>
    </div>
  );
}

function ViewControls() {
  return (
    <div className="flex gap-[5px]">
      <Svg><path d="M1.500 2.500h13v11h-13z" fill="#fff" /><path d="M2 3h4v3H2zM10 3h4v3h-4zM6 6h4v4H6zM2 10h4v3H2zM10 10h4v3h-4z" fill={INK} stroke="none" /></Svg>
      <Svg><path d="M1.500 6l4-4h9v7l-4 4h-9zM1.500 6h9v7M10.500 6l4-4" fill="#fff" strokeWidth="1.200" /></Svg>
      <Svg><circle cx="7" cy="7" r="4" fill="#ffc93c" stroke="#d88d10" /><path d="M7 0v2M7 12v2M0 7h2M2 2l1.500 1.500M12 2l-1.500 1.500" stroke="#d88d10" /><path d="M8 8l6 7M14 8l-6 7" stroke="#c8141c" strokeWidth="2" /></Svg>
      <Svg><circle cx="6" cy="6" r="4.500" fill="#bfe3fa" stroke="#2f7fc0" /><path d="M1 13h8" /><path d="M8 8l6 7M14 8l-6 7" stroke="#c8141c" strokeWidth="2" /></Svg>
      <Svg><path d="M1 3l2 2c0-2 6-2 6 0v5c0 2-5 2-6 0zM6 1v2" fill="#f4f4f4" /><circle cx="13" cy="8" r="2" stroke={BLUE} /><path d="M13 10v4" stroke={BLUE} /></Svg>
      <Svg><path d="M3.500 1v12.500H0M1 3.500h13M6.500 13V6.500H11" stroke="#1c5da8" strokeWidth="1.700" /><path d="M8 8l6 6M14 8l-6 6" stroke="#c8141c" strokeWidth="2" /></Svg>
      <Svg><path d="M3.500 1v12.500H0M1 3.500h8M6.500 13V6.500H9" stroke="#1c5da8" strokeWidth="1.700" /><circle cx="13" cy="5" r="2.200" stroke={BLUE} /><path d="M13 7v6" stroke={BLUE} /></Svg>
      <Svg><path d="M1 6l5-4 8 3v3M2 6v6l6 2M1 6l4-1 4 4" fill="#eee" /><path d="M9 10h6v5H9zM10.500 10V8h3v2" fill="#cfe3d8" stroke="#2c5c44" /></Svg>
      <Svg><path d="M0 4l3-1 2 5M8 8c1-4 6-5 7-1" strokeWidth="1.200" /><circle cx="6" cy="10" r="2.500" fill="#dceefa" /><circle cx="12" cy="8" r="2.500" fill="#dceefa" /></Svg>
      <Svg><circle cx="8" cy="6" r="3" fill="#bfe3fa" stroke={BLUE} /><path d="M7 9v4h2V9" stroke={BLUE} /></Svg>
      <Svg><path d="M5 2.500h10v8M5 2.500L2 6M2 6h9v8M11 6l4-3.500M2 6v9M5 6v8M8 6v8M8 3v3M12 3v8M2 10h9l4-3" /><path d="M5 4v11M1 12h11" stroke="#b8332a" /></Svg>
      <svg width="5" height="8" viewBox="0 0 5 8" className="ml-1 self-center"><path d="M5 0v8L0 4z" /></svg>
    </div>
  );
}

function Viewport() {
  return (
    <main className="flex min-w-0 flex-1 flex-col bg-[#f0f0f0]">
      <div className="flex min-h-0 flex-1">
        <div className="relative min-w-0 flex-1 bg-black">
          <Plan />
          <div className="absolute top-2 right-1 flex items-center gap-1.5">
            <svg width="12" height="12" viewBox="0 0 12 12"><path d="M0 7h12v3H0z" fill="#fff" /></svg>
            <svg width="12" height="12" viewBox="0 0 12 12" fill="none" stroke="#fff" strokeWidth="1.600"><path d="M3.500 3V1h7.500v7.500H9M1 3.500h7.500V11H1zM4 7h2" /></svg>
            <svg width="12" height="12" viewBox="0 0 12 12" stroke="#fff" strokeWidth="2.800"><path d="M2 2l8 8M10 2l-8 8" /></svg>
          </div>
          <ViewCube />
          <NavBar />
        </div>
        <div className="flex w-[18px] flex-col items-center justify-between border-r border-white py-2 text-[#444]">
          <Caret className="rotate-180" />
          <span className="h-4 w-3.5 rounded-xs border border-[#999] bg-linear-to-r from-white to-[#ccc]" />
          <Caret />
        </div>
      </div>
      <div className="flex h-[19px] items-center pb-0.5 text-xs text-black">
        <span className="ml-[21px] w-[58px] font-['Liberation_Sans','Noto_Sans_CJK_SC',sans-serif] whitespace-pre">1  :  100</span>
        <ViewControls />
        <div className="flex flex-1 items-center justify-between">
          <span className="w-px" />
          <span className="h-3.5 w-[15px] rounded-xs border border-[#999] bg-linear-to-b from-white to-[#ccc]" />
          <svg width="4" height="7" viewBox="0 0 4 7" className="mr-1.5"><path d="M0 0v7l4-3.500z" /></svg>
        </div>
        <svg width="16" height="14" viewBox="0 0 16 14" className="mr-1"><path d="M12 3h2v2h-2zM8 7h2v2H8zM12 7h2v2h-2zM4 11h2v2H4zM8 11h2v2H8zM12 11h2v2h-2z" fill="#b8b8b8" /></svg>
      </div>
    </main>
  );
}

type Node = { level: number; text: string; box?: "+" | "-"; icon?: "views" | "legend" | "table" | "sheet"; picked?: boolean };

const leaf = (level: number, text: string): Node => ({ level, text });

const tree: Node[] = [
  { level: 0, text: "视图 (视图分类)", box: "-", icon: "views" },
  { level: 1, text: "???", box: "-" },
  { level: 2, text: "结构平面", box: "+" },
  { level: 2, text: "楼层平面", box: "-" },
  { level: 3, text: "5", picked: true },
  { level: 2, text: "天花板平面", box: "+" },
  { level: 2, text: "三维视图", box: "+" },
  { level: 1, text: "建筑", box: "-" },
  { level: 2, text: "楼层平面", box: "-" },
  leaf(3, "1"),
  leaf(3, "2"),
  leaf(3, "【审核】建筑结构2"),
  leaf(3, "场地"),
  { level: 2, text: "天花板平面", box: "+" },
  { level: 2, text: "三维视图", box: "+" },
  { level: 2, text: "立面", box: "-" },
  leaf(3, "东"),
  leaf(3, "北"),
  leaf(3, "南"),
  leaf(3, "西"),
  { level: 2, text: "面积平面", box: "-" },
  leaf(3, "1"),
  { level: 0, text: "图例", box: "-", icon: "legend" },
  leaf(1, "图例 1"),
  { level: 0, text: "明细表/数量", box: "-", icon: "table" },
  leaf(1, "0_图纸目录"),
  leaf(1, "A_人防分区面积明细表"),
  leaf(1, "A_使用面积明细表"),
  leaf(1, "A_总建筑面积明细表"),
  leaf(1, "A_防火分区面积明细表"),
  leaf(1, "B_内墙明细表"),
  leaf(1, "B_剪力墙明细表"),
  leaf(1, "B_外墙明细表"),
  leaf(1, "B_屋面明细表"),
  leaf(1, "B_楼板明细表"),
  leaf(1, "B_结构构架明细表"),
  leaf(1, "B_结构柱明细表"),
  leaf(1, "C_停车场明细表"),
  leaf(1, "C_幕墙明细表"),
  leaf(1, "C_扶手明细表"),
  leaf(1, "C_楼梯明细表"),
  leaf(1, "T_房间明细表"),
  leaf(1, "T_窗明细表"),
  leaf(1, "T_门明细表"),
  { level: 0, text: "图纸 (全部)", box: "-", icon: "sheet" },
  leaf(1, "BJ- - 设计变更单"),
];

const treeIcons = {
  views: <Svg><path d="M4 1.500H1.500V4M12 1.500h2.500V4M4 14.500H1.500V12M12 14.500h2.500V12" strokeWidth="1.200" /><path d="M4.500 6.500l2-2h5v5l-2 2h-5z" fill="#fff" /></Svg>,
  legend: <Svg><rect x="0.500" y="1.500" width="15" height="13" fill="#e8eaec" /><path d="M1 3h14" strokeWidth="3" /><path d="M3 6h3v3H3zM3 11h3v2H3z" fill={INK} /><path d="M8 7h2M11 7h3M8 9h2M11 12h3M8 12h2" /></Svg>,
  table: <Svg><rect x="0.500" y="2.500" width="15" height="11" fill="#fff" /><path d="M1 4h14" strokeWidth="2.500" /><path d="M1 7.500h14M1 10.500h14M5.500 4v9M10.500 4v9" stroke="#777d88" /></Svg>,
  sheet: <Svg><path d="M0.500 2.500h11l4 4v8h-15z" fill="#eef0f2" strokeWidth="1.200" /><path d="M11 2v5h4M3 11V8h4v4H3M9 9h4v3H9M3 5h5" /></Svg>,
};

// Is there a later row on this level before its branch ends?
function goesOn(index: number, level: number) {
  if (level === 0) return true;
  for (let i = index + 1; i < tree.length; i++) {
    if (tree[i].level < level) return false;
    if (tree[i].level === level) return true;
  }
  return level === 1;
}

function TreeRow({ node, index }: { node: Node; index: number }) {
  return (
    <li className="flex h-5 items-center whitespace-nowrap">
      {Array.from({ length: node.level }, (_, level) => (
        <svg key={level} width="20" height="20" viewBox="0 0 20 20" className="shrink-0">
          {goesOn(index, level) && <path d="M9.500 0v20" stroke="#8c8c8c" strokeDasharray="1 1" />}
        </svg>
      ))}
      <svg width="26" height="20" viewBox="0 0 26 20" fill="none" stroke="#8c8c8c" className={node.icon ? "-mr-1.5 shrink-0" : "shrink-0"}>
        {index > 0 && <path d="M9.500 0v10" strokeDasharray="1 1" />}
        {goesOn(index, node.level) && <path d="M9.500 10v10" strokeDasharray="1 1" />}
        <path d={node.icon ? "M10 10.500h9" : "M10 10.500h14"} strokeDasharray="1 1" />
        {node.box && (
          <g>
            <rect x="5.500" y="6.500" width="8" height="8" fill="#fff" stroke="#919191" />
            <path d={node.box === "+" ? "M7 10.500h5M9.500 8v5" : "M7 10.500h5"} stroke="#3355a0" />
          </g>
        )}
      </svg>
      {node.icon && <span className="ml-px">{treeIcons[node.icon]}</span>}
      {node.icon ? (
        <span className="ml-1.5">{node.text}</span>
      ) : (
        <span className={node.picked ? "-ml-0.5 bg-[#e0e0e0] px-[3px] leading-5" : "ml-px"}>{node.text}</span>
      )}
    </li>
  );
}

function Browser() {
  return (
    <aside className="flex w-[228px] shrink-0 bg-[#f0f0f0] pr-0.5 pl-[6px]">
      <div className="mb-px flex min-w-0 flex-1 flex-col border-r-2 border-l-2 border-[#6f7478] bg-[#e6edf5]">
        <PanelTitle text="cutain wall south.rvt - 项目浏览器" />
        <div className="mr-0.5 ml-px flex min-h-0 flex-1 border-l border-[#777] bg-white">
          <ul className="min-w-0 flex-1 overflow-hidden pt-px text-xs text-black">
            {tree.map((node, i) => (
              <TreeRow key={i} node={node} index={i} />
            ))}
          </ul>
          <div className="flex w-4 flex-col items-center bg-[#f0f0f0] text-[#444]">
            <Caret className="my-2 rotate-180" />
            <div className="flex w-[15px] flex-[82] items-center justify-center border border-[#979797] bg-linear-to-r from-white to-[#c8c8cc]">
              <svg width="8" height="8" viewBox="0 0 8 8"><path d="M0 1.500h8M0 4.500h8M0 7.500h8" stroke="#555" /></svg>
            </div>
            <div className="flex flex-[16] items-end pb-1.5">
              <Caret />
            </div>
          </div>
        </div>
      </div>
    </aside>
  );
}

function StatusBar() {
  return (
    <div className="flex h-6 items-center border-t border-[#8c8c8c] bg-linear-to-b from-[#e2e2e2] to-[#c4c4c4] text-xs text-black">
      <p className="w-[1080px] pl-0.5">单击可进行选择; 按 Tab 键并单击可选择其他项目; 按 Ctrl 键并单击可将新项目添加到选择集; 按 Shift 键并单击可取消选择。</p>
      <Svg><path d="M1 6l3-1 3 1v7l-3 2-3-2zM1 6l3 1 3-1M4 7v8" fill="#8cc4e8" stroke="#22628f" /><path d="M4 5V3l3-2 4 1v4" fill="#8fc97a" stroke="#2f7a22" strokeWidth="1.500" /><path d="M8.500 7v2l1.500 1v5h1v-5l1-1V7M13.500 7v2M13 10h2v5h-2z" stroke="#22628f" fill="#fff" /></Svg>
      <span className="relative ml-2.5">
        <select aria-label="工作集" className="block h-5 w-[206px] appearance-none bg-white" />
        <Caret className="pointer-events-none absolute top-2 right-1.5 text-[#888]" />
      </span>
      <span className="ml-1 flex h-5 w-[52px] items-center gap-1.5 bg-[#dcdcdc] pl-0.5">
        <Svg><path d="M6 1h9v4h-2l-2 3v3l-4-3V5H6z" fill="#eee" stroke="#999" /><path d="M1 13l4-5 3 5z" fill="#aaa" stroke="#999" /></Svg>
        :0
      </span>
      <span className="ml-1 flex h-5 items-center gap-2.5 bg-[#dcdcdc] pr-2 pl-0.5">
        <Svg><path d="M1.500 1.500h13v13h-13z" fill="#fff" /><path d="M1 3h14" strokeWidth="2" /><path d="M4 6h3M4 9h3M4 12h3M9 6h4M9 9h4M9 12h4" /></Svg>
        <Svg><path d="M1 1h13v13H1z" fill="#a2a2a2" stroke="#999" /><path d="M3 11h5v-3l4 4-4 3" fill="#ddd" stroke="#777" /></Svg>
      </span>
      <span className="relative">
        <select aria-label="主模型" className="block h-5 w-[154px] appearance-none bg-[#fafafa] pl-0.5 text-[#888]">
          <option>主模型</option>
        </select>
        <Caret className="pointer-events-none absolute top-2 right-1.5 text-[#888]" />
      </span>
      <label className="ml-auto flex items-center gap-1">
        <input type="checkbox" className="h-[13px] w-[13px] appearance-none border border-[#555] bg-[#f6f6f6]" />
        单击和拖曳
      </label>
      <span className="ml-1 mr-[67px] flex items-center">
        <Svg><path d="M1 2h14v1l-5 5v6l-4-2V8L1 3z" fill="#f4f4f4" strokeWidth="1.200" /></Svg>
        <span className="pt-1">:0</span>
      </span>
    </div>
  );
}

const windows = [
  {
    title: "Autodesk Revit 20...",
    icon: <Svg><path d="M0 0h16v9H0z" fill="#ddd" stroke="none" /><path d="M0 9h16v7H0z" fill="#9b4fa5" stroke="none" /><path d="M5 8V1.500h3c3 0 3 3 0 3H5M8 4.500L11 8" stroke="#111" strokeWidth="1.800" /></Svg>,
  },
  {
    title: "计算机",
    icon: <Svg><path d="M4.500 1.500h11v9h-11z" fill="#1737c4" stroke="#dcdcdc" strokeWidth="1.500" /><path d="M7 3h6v3z" fill="#6fa2f5" stroke="none" /><path d="M1 3h3v11H1z" fill="#cfcfcf" stroke="#777" /><path d="M7 13.500h7" stroke="#ddd" strokeWidth="2" /></Svg>,
  },
  {
    title: "百度一下，你就知道...",
    icon: <Svg><path d="M13.500 10.500A5.500 5.500 0 118 3a5.500 5.500 0 015.500 6H4" stroke="#2f9fe8" strokeWidth="2.600" /><path d="M1 14C-1 9 9-1 15 2" stroke="#f7c733" strokeWidth="1.600" /></Svg>,
  },
  {
    title: "文档 1 - Microsoft ...",
    icon: <Svg><path d="M5.500 2.500h10v12h-10z" fill="#fff" stroke="#6f8fc5" /><path d="M8 11h6M8 13h6M11 5h3M11 8h3" stroke="#6f8fc5" /><path d="M0.500 0.500h10v9h-10z" fill="#2d5bb0" stroke="#dbe6f8" /><path d="M2.500 3l1.500 4.500L5.500 4 7 7.500 8.500 3" stroke="#fff" /></Svg>,
  },
];

function Taskbar() {
  return (
    <footer className="flex h-[30px] items-center bg-linear-to-r from-[#3c6297] via-[#43669e] to-[#3f6399] text-white shadow-[inset_0_1px_0_#1e2f4e]">
      <button type="button" aria-label="开始" className="relative z-10 -mt-1.5 ml-2 h-9 w-9">
        <svg width="36" height="36" viewBox="0 0 36 36" aria-hidden="true">
          <circle cx="18" cy="18" r="17" fill="url(#orb)" stroke="#1b3a5e" />
          <path d="M9 11c3-2 5-2 8-.5l-1.500 7c-3-1.500-5-1.500-8 .5z" fill="#f0592a" />
          <path d="M18.500 11c3 1.500 5.500 1.500 8.500 0l-1.500 7c-3 1.500-5.500 1.500-8.500 0z" fill="#8cc63f" />
          <path d="M7 19.500c3-2 5-2 8-.5l-1.500 7c-3-1.500-5-1.500-8 .5z" fill="#3fa0e8" />
          <path d="M16.500 19.500c3 1.500 5.500 1.500 8.500 0l-1.500 7c-3 1.500-5.500 1.500-8.500 0z" fill="#fbc52c" />
          <path d="M3 13C7 3 29 3 33 13c-8 5-22 5-30 0z" fill="#fff" fillOpacity="0.250" />
        </svg>
      </button>
      <div className="ml-3.5 flex h-[29px] gap-1 self-end">
        {windows.map((w, i) => (
          <button
            key={w.title}
            type="button"
            className={`flex w-[158px] items-center gap-1 overflow-hidden rounded-t-xs border border-[#1f3358] px-2 text-left text-xs whitespace-nowrap shadow-[inset_0_0_0_1px_#93a8cd] ${
              i === 0
                ? "bg-linear-to-br from-[#b7c4dc] via-[#8ea2c6] to-[#7089b8]"
                : "bg-linear-to-br from-[#8095bd] via-[#50699c] to-[#3d5b94]"
            }`}
          >
            {w.icon}
            {w.title}
          </button>
        ))}
      </div>
      <div className="ml-auto flex items-center gap-2">
        <Svg><rect x="1" y="6" width="14" height="7" fill="#d6d6d6" stroke="#777" /><path d="M3 8.500h10M3 10.500h10" stroke="#777" strokeDasharray="1 1" /><path d="M4 5c2-3 5 0 9-3" stroke="#ddd" /></Svg>
        <Svg><circle cx="8" cy="8" r="7" fill="#1126b8" stroke="#dce4ff" /><path d="M5.500 6.500c0-3 5-3 5 0 0 2-2.500 1.500-2.500 3.500M8 11v1.500" stroke="#fff" strokeWidth="1.800" /></Svg>
        <svg width="9" height="22" viewBox="0 0 9 22" className="mb-1" fill="none"><path d="M3.500 1.500h5v4h-5zM1.500 3.500h5v4h-5z" stroke="#fff" /><path d="M1 16h7l-3.500 3z" fill="#fff" /></svg>
        <Caret className="mx-1 rotate-180" />
        <Svg><path d="M1 5h4l5-4v14l-5-4H1z" fill="#e85a2a" stroke="#8f2a10" /><path d="M12 5c2 2 2 4 0 6M14 3c2 3 2 7 0 10" stroke="#ddd" /></Svg>
        <Svg><rect x="0.500" y="1.500" width="15" height="13" fill="#2f6fd0" stroke="#cfe0fb" /><path d="M6 5h8M6 10h8" stroke="#fff" strokeWidth="2.500" /><path d="M3.500 2v12" stroke="#cfe0fb" /></Svg>
        <Svg><circle cx="8" cy="8" r="7" fill="#cfcfcf" stroke="#888" /><path d="M8 2c4 2 4 9 0 12" fill="#f6f6f6" stroke="#fff" /></Svg>
        <Svg><path d="M2.500 1v14" stroke="#fff" strokeWidth="1.500" /><path d="M3 2c4-2 5 2 10 0v6c-5 2-6-2-10 0z" fill="#fff" stroke="#ccc" /><circle cx="11" cy="11" r="4.500" fill="#d8261c" stroke="#fff" strokeWidth="0.800" /><path d="M9 9l4 4M13 9l-4 4" stroke="#fff" strokeWidth="1.400" /></Svg>
        <Svg><path d="M1 6h3l4-4v12l-4-4H1z" fill="#fff" stroke="#ddd" /><path d="M10 5c2 2 2 4 0 6M12.500 3c3 3 3 7 0 10" stroke="#fff" /></Svg>
        <Svg><path d="M2 14v-3M5 14V9M8 14V7M11 14V4M14 14V2" stroke="#fff" strokeWidth="2" /></Svg>
        <time className="ml-3 text-xs">16:26</time>
        <button type="button" aria-label="显示桌面" className="ml-1 h-[29px] w-[14px] border border-[#20365c] bg-linear-to-br from-[#8aa0c6] to-[#3d5b94]" />
      </div>
    </footer>
  );
}

export default function App() {
  return (
    <div className="flex h-screen flex-col overflow-hidden bg-[#f0f0f0] font-['Open_Sans','Noto_Sans_CJK_SC',sans-serif]">
      <Defs />
      <Header />
      <Ribbon />
      <QuickAccess />
      <div className="h-[33px] shrink-0 border-t-2 border-b-2 border-t-white border-b-[#a0a0a4] bg-[#e0e1e3]" />
      <div className="flex min-h-0 flex-1">
        <Properties />
        <Viewport />
        <Browser />
      </div>
      <StatusBar />
      <Taskbar />
    </div>
  );
}
